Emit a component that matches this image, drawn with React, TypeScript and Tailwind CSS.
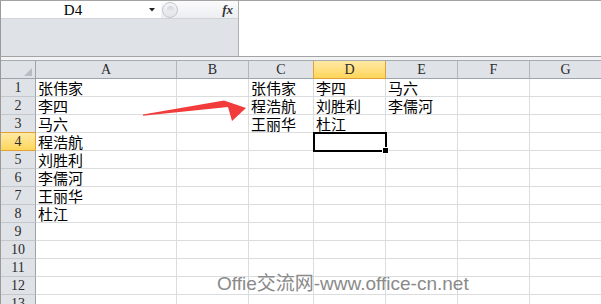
import React from "react";

type Col = { l: string; w: string; hb: string; hbg: string };

const cols: Col[] = [
  { l: "A", w: "w-[141px]", hb: "border-r-[#b3b7bd]", hbg: "bg-[#dfe2e7]" },
  { l: "B", w: "w-[72px]", hb: "border-r-[#b3b7bd]", hbg: "bg-[#dfe2e7]" },
  { l: "C", w: "w-[65px]", hb: "border-r-[#e2a03a]", hbg: "bg-[#dfe2e7]" },
  { l: "D", w: "w-[72px]", hb: "border-r-[#e2a03a]", hbg: "bg-gradient-to-b from-[#ffe9a2] to-[#ffd658]" },
  { l: "E", w: "w-[72px]", hb: "border-r-[#b3b7bd]", hbg: "bg-[#dfe2e7]" },
  { l: "F", w: "w-[72px]", hb: "border-r-[#b3b7bd]", hbg: "bg-[#dfe2e7]" },
  { l: "G", w: "w-[72px]", hb: "border-r-[#b3b7bd]", hbg: "bg-[#dfe2e7]" },
];

const data: string[][] = [
  ["张伟家", "", "张伟家", "李四", "马六", "", ""],
  ["李四", "", "程浩航", "刘胜利", "李儒河", "", ""],
  ["马六", "", "王丽华", "杜江", "", "", ""],
  ["程浩航", "", "", "", "", "", ""],
  ["刘胜利", "", "", "", "", "", ""],
  ["李儒河", "", "", "", "", "", ""],
  ["王丽华", "", "", "", "", "", ""],
  ["杜江", "", "", "", "", "", ""],
  ["", "", "", "", "", "", ""],
  ["", "", "", "", "", "", ""],
  ["", "", "", "", "", "", ""],
  ["", "", "", "", "", "", ""],
  ["", "", "", "", "", "", ""],
];

const hdr = "font-['Liberation_Serif','Noto_Sans_CJK_SC',serif]";
const cjk = "font-['Noto_Sans_CJK_SC','Liberation_Sans',sans-serif]";

export default function App() {
  return (
    <div className="relative w-[601px] h-[304px] overflow-hidden bg-white">
      {/* Name box / formula bar */}
      <div className="flex h-[57px] border-t border-b border-t-[#a3a3a3] border-b-[#a3a3a3]">
        <div className="flex flex-col w-[239px] border-l border-r border-l-[#9a9a9a] border-r-[#b0b0b0]">
          <div className="flex h-[18px] border-b border-b-[#d0d3d8]">
            <div className="flex items-center w-[160px] bg-white">
              <div className={`w-[144px] text-center text-[15px] leading-[18px] text-black ${hdr}`}>D4</div>
              <svg width="6" height="4" viewBox="0 0 6 4" className="ml-[4px]">
                <polygon points="0,0 6,0 3,3.5" fill="#222" />
              </svg>
            </div>
            <div className="relative flex flex-1 items-center justify-end bg-gradient-to-b from-[#fbfbfc] to-[#eceef1]">
              <div className="absolute left-[1px] top-[1px] w-[16px] h-[16px] rounded-full border border-[#c4c7cc] bg-gradient-to-b from-[#f4f5f7] to-[#e1e4e8]" />
              <div className="absolute left-[6px] top-[5px] w-[7px] h-[7px] rounded-full bg-gradient-to-b from-[#d2d5da] to-[#eef0f2]" />
              <span className="mr-[5px] text-[13px] leading-[18px] italic font-bold text-[#333] font-['Liberation_Serif',serif]">fx</span>
            </div>
          </div>
          <div className="flex-1 bg-[#dfe2e7]" />
        </div>
        <div className="flex-1 bg-white" />
      </div>
      <div className="h-[3px] bg-[#f2f3f5] border-l border-l-[#9a9a9a]" />

      {/* Grid */}
      <div className="border-l border-l-[#9a9a9a]">
        {/* Column headers */}
        <div className="flex h-[19px] border-t border-t-[#a7abb1]">
          <div className="relative w-[35px] shrink-0 bg-[#dfe2e7] border-r border-b border-r-[#9da3aa] border-b-[#9da3aa]">
            <svg width="8" height="8" viewBox="0 0 8 8" className="absolute right-[3px] bottom-[2px]">
              <polygon points="8,0 8,8 0,8" fill="#b9bdc3" />
            </svg>
          </div>
          {cols.map((c) => (
            <div
              key={c.l}
              className={`${c.w} shrink-0 ${c.hbg} border-r ${c.hb} border-b ${c.l === "D" ? "border-b-[#e2a03a]" : "border-b-[#9da3aa]"} text-center text-[14px] leading-[17px] text-[#2b2b2b] ${hdr}`}
            >
              {c.l}
            </div>
          ))}
        </div>
        {/* Rows */}
        {data.map((row, i) => {
          const n = i + 1;
          const sel = n === 4;
          const aboveSel = n === 3;
          return (
            <div key={n} className="flex h-[18px]">
              <div
                className={`w-[35px] shrink-0 border-r border-b text-center text-[14px] leading-[17px] text-[#2b2b2b] ${hdr} ${
                  sel
                    ? "bg-gradient-to-b from-[#ffe9a2] to-[#ffd658] border-r-[#e2a03a] border-b-[#e2a03a]"
                    : aboveSel
                    ? "bg-[#dfe2e7] border-r-[#9da3aa] border-b-[#e2a03a]"
                    : "bg-[#dfe2e7] border-r-[#9da3aa] border-b-[#c4c8cd]"
                }`}
              >
                {n}
              </div>
              {cols.map((c, j) => (
                <div
                  key={c.l}
                  className={`${c.w} shrink-0 border-r border-b border-r-[#dadcdd] border-b-[#dadcdd] pl-[2px] text-[15px] leading-[17px] text-black whitespace-nowrap ${cjk}`}
                >
                  {row[j]}
                </div>
              ))}
            </div>
          );
        })}
      </div>

      {/* Selected cell D4 */}
      <div className="absolute left-[313px] top-[132px] w-[74px] h-[20px] border-2 border-black pointer-events-none" />
      <div className="absolute left-[382px] top-[147px] w-[7px] h-[7px] bg-white pointer-events-none" />
      <div className="absolute left-[383px] top-[148px] w-[5px] h-[5px] bg-black pointer-events-none" />

      {/* Red arrow */}
      <svg className="absolute left-0 top-0 pointer-events-none" width="601" height="304" viewBox="0 0 601 304">
        <polygon points="143,114.5 224,100.5 246,108 232,121 228,107 143,115.8" fill="#f23b3b" />
      </svg>

      {/* Watermark */}
      <div className="absolute left-[217px] top-[274px] text-[19px] leading-[19px] text-[#8a8a8a] whitespace-nowrap font-['Liberation_Sans','Noto_Sans_CJK_SC',sans-serif]">
        Offie交流网-www.office-cn.net
      </div>
    </div>
  );
}
